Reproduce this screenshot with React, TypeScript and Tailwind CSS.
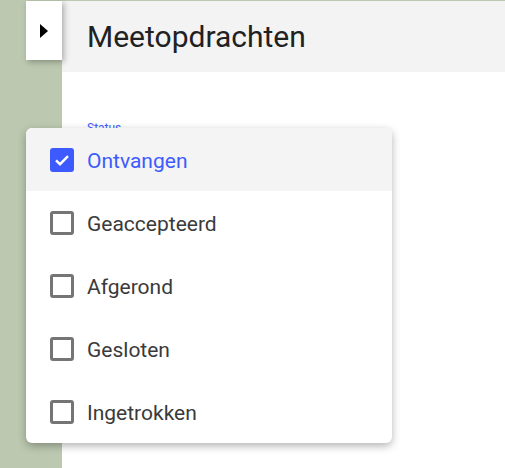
import React from "react";

const items = ["Ontvangen", "Geaccepteerd", "Afgerond", "Gesloten", "Ingetrokken"];

function Box({ checked }: { checked: boolean }) {
  if (checked) {
    return (
      <div className="w-[24px] h-[24px] rounded-[3px] bg-[#3d5afe] flex items-center justify-center">
        <svg width="18" height="18" viewBox="0 0 18 18">
          <path d="M3 9.3 L7 13.2 L15 5.2" fill="none" stroke="white" strokeWidth="2.4" />
        </svg>
      </div>
    );
  }
  return <div className="w-[24px] h-[24px] rounded-[3px] border-[3px] border-[#757575] bg-white" />;
}

export default function App() {
  return (
    <div
      className="relative w-[505px] h-[468px] bg-[#bcc9b0] overflow-hidden flex pt-[1px]"
      style={{ fontFamily: "Roboto, 'Noto Sans', sans-serif" }}
    >
      <div className="w-[62px] pl-[26px] relative z-10">
        <div className="w-[36px] h-[59px] bg-white shadow-[2px_2px_6px_rgba(0,0,0,0.3)] flex items-center justify-center">
          <svg width="10" height="14" viewBox="0 0 10 14">
            <path d="M1 0 L9 7 L1 14 Z" fill="#000" />
          </svg>
        </div>
      </div>
      <div className="flex-1 bg-white flex flex-col">
        <div className="h-[71px] bg-[#f3f3f3] pl-[25px] flex items-center">
          <span className="text-[30px] text-[#212121] leading-none">Meetopdrachten</span>
        </div>
        <div className="pl-[25px] pt-[50px] text-[12px] text-[#3d5afe] leading-none">Status</div>
      </div>
      <div className="absolute z-20 left-[26px] top-[128px] w-[366px] bg-white rounded-[6px] shadow-[0_3px_8px_rgba(0,0,0,0.3)] overflow-hidden flex flex-col">
        {items.map((t, i) => (
          <div
            key={t}
            className={`h-[63px] flex items-center pl-[24px] gap-[13px] ${i === 0 ? "bg-[#f4f4f4]" : ""}`}
          >
            <Box checked={i === 0} />
            <span className={`text-[21px] leading-none pt-[3px] ${i === 0 ? "text-[#3d5afe]" : "text-[#3a3a3a]"}`}>{t}</span>
          </div>
        ))}
      </div>
    </div>
  );
}
